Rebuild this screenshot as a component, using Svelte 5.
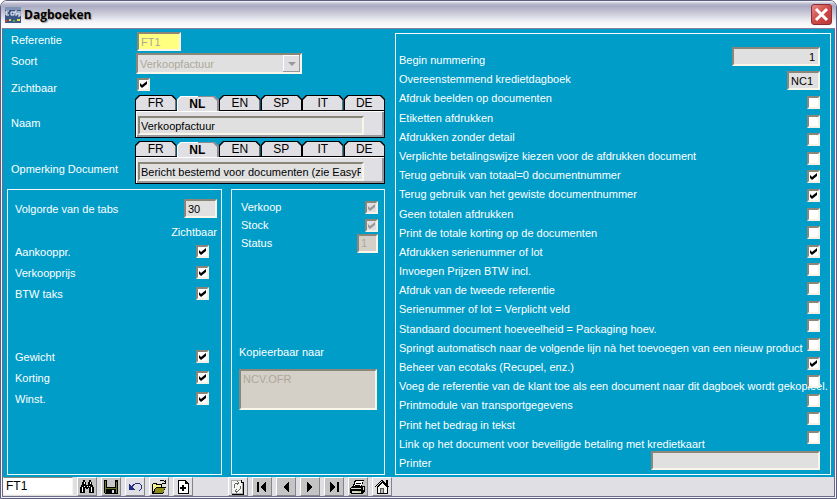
<script>
	let reference = "FT1";
	let search = "FT1";
	let languages = ["FR", "NL", "EN", "SP", "IT", "DE"];
	let language = "NL";

	let translated = [
		{ id: "naam", label: "Naam", value: "Verkoopfactuur" },
		{ id: "opmerking", label: "Opmerking Document", value: "Bericht bestemd voor documenten (zie EasyFo" },
	];

	let prices = [
		{ id: "aankoop", label: "Aankooppr.", checked: true },
		{ id: "verkoopprijs", label: "Verkoopprijs", checked: true },
		{ id: "btw", label: "BTW taks", checked: true },
	];
	let extras = [
		{ id: "gewicht", label: "Gewicht", checked: true },
		{ id: "korting", label: "Korting", checked: true },
		{ id: "winst", label: "Winst.", checked: true },
	];

	let options = [
		{ label: "Afdruk beelden op documenten", checked: false },
		{ label: "Etiketten afdrukken", checked: false },
		{ label: "Afdrukken zonder detail", checked: false },
		{ label: "Verplichte betalingswijze kiezen voor de afdrukken document", checked: false },
		{ label: "Terug gebruik van totaal=0 documentnummer", checked: true },
		{ label: "Terug gebruik van het gewiste documentnummer", checked: true },
		{ label: "Geen totalen afdrukken", checked: false },
		{ label: "Print de totale korting op de documenten", checked: false },
		{ label: "Afdrukken serienummer of lot", checked: true },
		{ label: "Invoegen Prijzen BTW incl.", checked: false },
		{ label: "Afdruk van de tweede referentie", checked: false },
		{ label: "Serienummer of lot = Verplicht veld", checked: false },
		{ label: "Standaard document hoeveelheid = Packaging hoev.", checked: false },
		{ label: "Springt automatisch naar de volgende lijn nà het toevoegen van een nieuw product", checked: false },
		{ label: "Beheer van ecotaks (Recupel, enz.)", checked: true },
		{ label: "Voeg de referentie van de klant toe als een document naar dit dagboek wordt gekopieel.", checked: false },
		{ label: "Printmodule van transportgegevens", checked: false },
		{ label: "Print het bedrag in tekst", checked: false },
		{ label: "Link op het document voor beveiligde betaling met kredietkaart", checked: false },
	];
</script>

<svelte:head>
	<title>Dagboeken</title>
</svelte:head>

<main class="window">
	<header class="titlebar">
		<svg class="logo" viewBox="0 0 16 16" aria-hidden="true">
			<rect width="16" height="16" fill="#3b5687" />
			<path d="M0 0h16v3H0z" fill="#7f93b5" />
			<path d="M1 4h3M1 4v4h3M1 6h2M6 8V5h3v3H6M12 4h-2v2h2v2h-2M13 4v3h2V4M15 7v2h-2" stroke="#fff" fill="none" />
			<path d="M0 13h2v2H0z" fill="#d33" />
			<path d="M4 12h2v2H4z" fill="#e8d44a" />
			<path d="M8 13h2v2H8z" fill="#4bb04b" />
			<path d="M12 12h3v2h-3z" fill="#e6e03c" />
		</svg>
		<h1>Dagboeken</h1>
		<button class="close" aria-label="Sluiten">
			<svg viewBox="0 0 19 19"><path d="M4 4l11 11M15 4L4 15" stroke="#fff" stroke-width="3" /></svg>
		</button>
	</header>

	<div class="frame">
		<form class="content">
			<div class="left">
				<div class="row">
					<label for="referentie">Referentie</label>
					<input id="referentie" class="field yellow" type="text" bind:value={reference} disabled />
				</div>
				<div class="row">
					<label for="soort">Soort</label>
					<select id="soort" class="field" disabled>
						<option>Verkoopfactuur</option>
					</select>
				</div>
				<div class="row visible">
					<label for="zichtbaar">Zichtbaar</label>
					<input id="zichtbaar" type="checkbox" checked />
				</div>
				{#each translated as item (item.id)}
					<div class="row tabrow">
						<label for={item.id}>{item.label}</label>
						<div class="tabbox">
							<div class="tabs">
								{#each languages as code}
									<button type="button" class="tab" class:active={code === language} on:click={() => (language = code)}>
										<span>{code}</span>
									</button>
								{/each}
							</div>
							<div class="pane">
								<input id={item.id} class="field" type="text" bind:value={item.value} />
							</div>
						</div>
					</div>
				{/each}

				<div class="boxes">
					<section class="box order">
						<div class="line">
							<label for="volgorde">Volgorde van de tabs</label>
							<input id="volgorde" class="field" type="text" value="30" />
						</div>
						<p>Zichtbaar</p>
						<div class="checks">
							{#each prices as item (item.id)}
								<div class="line">
									<label for={item.id}>{item.label}</label>
									<input id={item.id} type="checkbox" bind:checked={item.checked} />
								</div>
							{/each}
						</div>
						<div class="checks second">
							{#each extras as item (item.id)}
								<div class="line">
									<label for={item.id}>{item.label}</label>
									<input id={item.id} type="checkbox" bind:checked={item.checked} />
								</div>
							{/each}
						</div>
					</section>
					<section class="box kind">
						<div class="line">
							<label for="verkoop">Verkoop</label>
							<input id="verkoop" type="checkbox" checked disabled />
						</div>
						<div class="line">
							<label for="stock">Stock</label>
							<input id="stock" type="checkbox" checked disabled />
						</div>
						<div class="line">
							<label for="status">Status</label>
							<input id="status" class="field" type="text" value="1" disabled />
						</div>
						<div class="copy">
							<label for="kopie">Kopieerbaar naar</label>
							<textarea id="kopie" class="field" disabled>NCV.OFR</textarea>
						</div>
					</section>
				</div>
			</div>

			<section class="box right">
				<div class="labels">
					<label for="begin">Begin nummering</label>
					<label for="krediet">Overeenstemmend kredietdagboek</label>
					{#each options as option, i}
						<label for="optie{i}">{option.label}</label>
					{/each}
					<label for="printer">Printer</label>
				</div>
				<div class="controls">
					<input id="begin" class="field number" type="text" value="1" />
					<input id="krediet" class="field code" type="text" value="NC1" />
					<div class="options">
						{#each options as option, i}
							<input id="optie{i}" type="checkbox" bind:checked={option.checked} />
						{/each}
					</div>
					<input id="printer" class="field printer" type="text" />
				</div>
			</section>
		</form>

		<footer class="toolbar">
			<input class="search" type="text" aria-label="Zoeken" bind:value={search} />
			<button class="tool grey" aria-label="Zoeken">
				<svg viewBox="0 0 16 16">
					<path d="M4 1h2v2h1v3h2V3h1V1h2v2h1v3h1v2h1v6h-5V9H9v1H7V9H6v5H1V8h1V6h1V3h1z" />
					<path d="M5 3v2M11 3v2M3 8v5M12 8v5M8 7v1M5 7v1M10 7v1" stroke="#fff" />
				</svg>
			</button>
			<button class="tool grey" aria-label="Opslaan">
				<svg viewBox="0 0 16 16">
					<path d="M1 1h14v14H2l-1-1z" />
					<path d="M2 2h1v12H2zM3 9h10v1H3zM13 3h1v11h-1z" fill="#6b7a22" />
					<path d="M4 1h8v7H4z" fill="#c8c8c8" />
					<path d="M9 11h2v3H9z" fill="#ddd" />
				</svg>
			</button>
			<button class="tool" aria-label="Ongedaan maken">
				<svg viewBox="0 0 16 16">
					<path d="M2 5v6h6L6 9 4 7z" fill="#1f2f86" />
					<path d="M5 8l2-3h1l1-1h3l2 2v4l-2 2" fill="none" stroke="#1f2f86" />
				</svg>
			</button>
			<button class="tool" aria-label="Openen">
				<svg viewBox="0 0 16 16">
					<path d="M1 15V5l1-1h3l1 1h5v3h4l-3 7z" />
					<path d="M2 5h3v1h5v2H5l-3 5z" fill="#f8f28a" />
					<path d="M5 9h9l-2 5H3z" fill="#8b8b17" />
					<path d="M9 2l1-1h2l2 2v1M14 1v3h-3" fill="none" stroke="#000" />
				</svg>
			</button>
			<button class="tool" aria-label="Nieuw">
				<svg viewBox="0 0 16 16">
					<path d="M3.500 1.500h7l3 3v10h-10z" fill="#fff" stroke="#000" />
					<path d="M10 1v4h4M7 6h2v2h2v2H9v2H7v-2H5V8h2z" />
				</svg>
			</button>
			<button class="tool group" aria-label="Vernieuwen">
				<svg viewBox="0 0 16 16">
					<path d="M1.500 1.500h9l2 2v11h-11z" fill="#f4f4f0" stroke="#aaa" />
					<path d="M11 1v2h2v12H2" fill="none" stroke="#000" />
					<path d="M4 9V6l2-2h3M7 2l2 2-2 2M10 7v3l-2 2H5M7 10l-2 2 2 2" fill="none" stroke="#666" />
				</svg>
			</button>
			<button class="tool grey" aria-label="Eerste">
				<svg viewBox="0 0 16 16"><path d="M3 3h2v10H3zM12 3v10L6 8z" /></svg>
			</button>
			<button class="tool grey" aria-label="Vorige">
				<svg viewBox="0 0 16 16"><path d="M11 3v10L5 8z" /></svg>
			</button>
			<button class="tool grey" aria-label="Volgende">
				<svg viewBox="0 0 16 16"><path d="M5 3v10l6-5z" /></svg>
			</button>
			<button class="tool grey" aria-label="Laatste">
				<svg viewBox="0 0 16 16"><path d="M4 3v10l6-5zM11 3h2v10h-2z" /></svg>
			</button>
			<button class="tool grey" aria-label="Afdrukken">
				<svg viewBox="0 0 16 16">
					<path d="M5 1h9l-2 6h3v5l-3 3H1l-1-2V9l3-2z" />
					<path d="M6 2h7l-2 5H4z" fill="#fff" />
					<path d="M6 4h5M5 6h5" stroke="#000" />
					<path d="M1 9h10v1H1zM2 12h9v2H2zM13 8h1v3h-1z" fill="#d8d8c8" />
					<path d="M8 12h2v1H8z" fill="#c8c020" />
				</svg>
			</button>
			<button class="tool" aria-label="Start">
				<svg viewBox="0 0 16 16">
					<path d="M3.500 8v6.500h10V8l-5-5z" fill="#f4f4f0" stroke="#000" />
					<path d="M1 8l7-7 7 7M12 5V1h1v5" fill="none" stroke="#000" />
					<path d="M6.500 14V9.500h3V14" fill="#bbb" stroke="#555" />
				</svg>
			</button>
		</footer>
	</div>
</main>

<style>
	:global(body) {
		margin: 0;
		background: #fff;
	}

	.window {
		box-sizing: border-box;
		min-height: 100vh;
		display: flex;
		flex-direction: column;
		border: 1px solid #5e5e80;
		border-radius: 7px 7px 0 0;
		background: #f4f4f8;
		font: 11px/16px "Liberation Sans", Arial, sans-serif;
		color: #fff;
		overflow: hidden;
	}

	input,
	select,
	textarea,
	button {
		box-sizing: border-box;
		margin: 0;
		font: inherit;
		border-radius: 0;
	}

	/* title bar */
	.titlebar {
		display: flex;
		align-items: center;
		height: 27px;
		padding: 0 4px;
		background: linear-gradient(#fff 0, #c6c6d6 2px, #a9a9c2 5px, #c4c4d4 11px, #f4f4f8 21px, #fff 100%);
	}

	.logo {
		width: 16px;
		height: 16px;
	}

	h1 {
		flex: 1;
		margin: 0 0 0 3px;
		font: bold 12px/20px "Open Sans", sans-serif;
		color: #000;
		text-shadow: 1px 1px 1px #999;
	}

	.close {
		width: 21px;
		height: 21px;
		padding: 0;
		border: 1px solid #8c2b35;
		border-radius: 3px;
		background: linear-gradient(135deg, #e58a86, #cf4a48 50%, #b8383c);
	}

	.close svg {
		display: block;
		width: 19px;
		height: 19px;
	}

	.frame {
		flex: 1;
		display: flex;
		flex-direction: column;
		margin: 0 1px 1px;
		border: 1px solid #6a6a8c;
		border-top-color: #8c7f9e;
	}

	.content {
		flex: 1;
		display: flex;
		gap: 10px;
		padding: 3px 3px 2px;
		background: #009dc9;
	}

	.left {
		width: 379px;
		display: flex;
		flex-direction: column;
	}

	/* sunken controls */
	.field {
		height: 19px;
		padding: 0 2px;
		border: 2px solid;
		border-color: #8a8678 #f8f6ea #f8f6ea #8a8678;
		background: #e0e0e0;
		color: #000;
		outline: none;
		opacity: 1;
	}

	.field:disabled {
		color: #aca899;
	}

	.yellow {
		width: 44px;
		background: #ffff80;
	}

	input[type="checkbox"] {
		appearance: none;
		flex: none;
		width: 13px;
		height: 13px;
		border: 2px solid;
		border-color: #8a8678 #f4f2e6 #f4f2e6 #8a8678;
		background: #fff;
	}

	input[type="checkbox"]:checked {
		background: #fff url("data:image/svg+xml,%3Csvg xmlns='http://www.w3.org/2000/svg' viewBox='0 0 9 9'%3E%3Cpath d='M1 3l2 2 5-4v3L3 8 1 6z'/%3E%3C/svg%3E") center / 9px 9px no-repeat;
	}

	input[type="checkbox"]:disabled {
		background: #e0e0e4 url("data:image/svg+xml,%3Csvg xmlns='http://www.w3.org/2000/svg' viewBox='0 0 9 9'%3E%3Cpath d='M1 3l2 2 5-4v3L3 8 1 6z' fill='%23999'/%3E%3C/svg%3E") center / 9px 9px no-repeat;
	}

	.row {
		display: flex;
		align-items: flex-start;
		height: 21px;
	}

	.row > label {
		width: 124px;
		padding-left: 5px;
	}

	.row > input {
		margin-left: 2px;
	}

	.row > select {
		appearance: none;
		width: 166px;
		height: 21px;
		margin-left: 1px;
		background: #e0e0e0 url("data:image/svg+xml,%3Csvg xmlns='http://www.w3.org/2000/svg' viewBox='0 0 17 17'%3E%3Cpath d='M0 0h17v17H0z' fill='%23999'/%3E%3Cpath d='M0 0h16v16H0z' fill='%23fff'/%3E%3Cpath d='M1 1h15v15H1z' fill='%23dfdfe4'/%3E%3Cpath d='M5 7h8l-4 4z' fill='%23999'/%3E%3C/svg%3E") right center / 17px 17px no-repeat;
	}

	.visible {
		align-items: flex-end;
		margin-bottom: 1px;
	}

	.visible input {
		margin-bottom: 4px;
	}

	.visible label {
		line-height: 14px;
	}

	/* language tabs */
	.tabrow {
		height: 42px;
		margin-bottom: 4px;
		align-items: flex-end;
	}

	.tabrow > label {
		padding-bottom: 7px;
		box-sizing: border-box;
	}

	.row.tabrow > label {
		width: 129px;
	}

	.tabbox {
		width: 250px;
	}

	.tabs {
		display: flex;
		align-items: flex-end;
	}

	.tab {
		flex: 1;
		height: 15px;
		padding: 1px 1px 0;
		border: 0;
		background: #000;
		clip-path: polygon(4px 0, calc(100% - 4px) 0, 100% 4px, 100% 100%, 0 100%, 0 4px);
		color: #000;
		font-size: 12px;
		line-height: 14px;
	}

	.tab span {
		display: block;
		height: 14px;
		background: #dfdfe4;
		clip-path: polygon(4px 0, calc(100% - 4px) 0, 100% 4px, 100% 100%, 0 100%, 0 4px);
	}

	.tab.active {
		z-index: 1;
		height: 15px;
		margin-bottom: -1px;
		padding: 1px 2px 0 1px;
		background: linear-gradient(90deg, #fff 50%, #8c8c94 50%);
		font-weight: bold;
	}

	.tab.active span {
		line-height: 15px;
	}

	.pane {
		padding: 5px 3px 2px 1px;
		border: 1px solid #000;
		background: #dfdfe4;
		box-shadow: inset 1px 1px #fff, inset -2px -2px #98989f;
	}

	.pane .field {
		display: block;
		width: 226px;
		margin-left: 1px;
		padding: 0 1px;
	}

	/* framed boxes */
	.box {
		box-sizing: border-box;
		border: 1px solid #f0faff;
	}

	.boxes {
		flex: 1;
		display: flex;
		justify-content: space-between;
		margin-top: 1px;
	}

	.order {
		width: 215px;
		margin-left: 1px;
		padding: 9px 4px 64px 7px;
	}

	.line {
		display: flex;
		justify-content: space-between;
		align-items: center;
	}

	#volgorde {
		width: 33px;
	}

	.box p {
		margin: 6px 0 1px;
		text-align: right;
	}

	.checks {
		padding-right: 8px;
	}

	.checks .line {
		height: 21px;
	}

	.second {
		margin-top: 42px;
	}

	.kind {
		width: 154px;
		padding: 8px 6px 0 9px;
	}

	.kind .line {
		height: 18px;
	}

	#status {
		width: 21px;
		background: #d4d0c8;
	}

	.copy {
		margin: 92px 1px 0 -2px;
	}

	.copy label {
		display: block;
	}

	textarea.field {
		display: block;
		width: 100%;
		height: 41px;
		margin-top: 9px;
		background: #d4d0c8;
		resize: none;
	}

	/* document options */
	.right {
		flex: 1;
		display: flex;
		min-width: 0;
		padding: 13px 10px 4px 3px;
		margin-top: 1px;
	}

	.labels {
		flex: 1;
		width: 0;
		display: flex;
		flex-direction: column;
		justify-content: space-between;
		padding-top: 6px;
	}

	.labels label {
		line-height: 14px;
		white-space: nowrap;
	}

	.controls {
		display: flex;
		flex-direction: column;
		align-items: flex-end;
		margin-left: -148px;
	}

	.number {
		width: 88px;
		text-align: right;
		padding-right: 3px;
	}

	.code {
		width: 33px;
		margin: 5px 0 6px;
	}

	.options {
		flex: 1;
		display: flex;
		flex-direction: column;
		justify-content: space-between;
	}

	.printer {
		width: 169px;
		margin-top: 7px;
	}

	/* bottom bar */
	.toolbar {
		display: flex;
		gap: 4px;
		height: 19px;
		background: #dfdfe4;
	}

	.search {
		width: 70px;
		height: 18px;
		padding: 0 2px;
		border: 1px solid #f8f6ea;
		border-top-color: #8a8678;
		background: #fff;
		color: #000;
		font-size: 12px;
	}

	.tool {
		width: 20px;
		height: 19px;
		padding: 0 1px;
		border: 1px solid;
		border-color: #fff #84848c #84848c #fff;
		background: #dfdfe4;
	}

	.tool.grey {
		background: #c4c4c4;
	}

	.tool svg {
		display: block;
		width: 16px;
		height: 16px;
		shape-rendering: crispEdges;
	}

	.group {
		margin-left: 31px;
	}
</style>
